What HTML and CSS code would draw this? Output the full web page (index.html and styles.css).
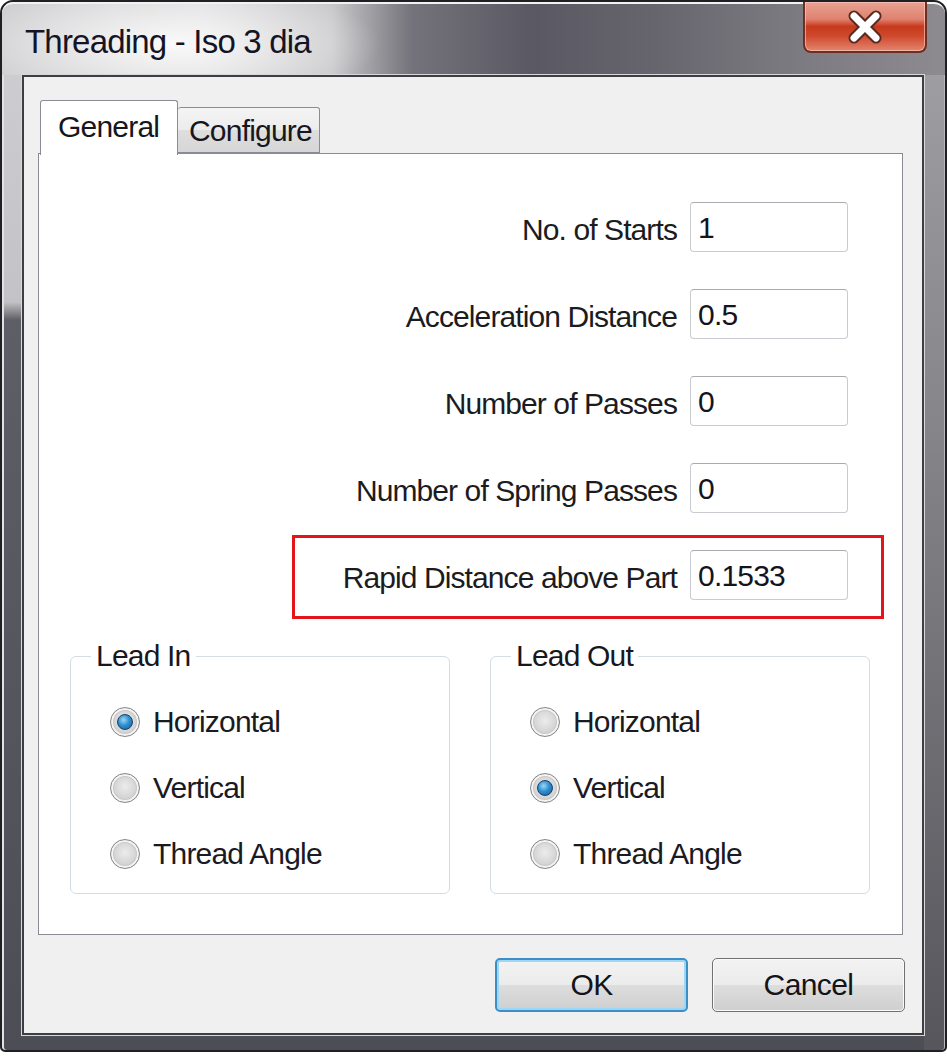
FILE: index.html
```html
<!DOCTYPE html>
<html>
<head>
<meta charset="utf-8">
<title>Threading - Iso 3 dia</title>
<link rel="stylesheet" href="styles.css">
</head>
<body>
<div class="window">
  <div class="titlebar">
    <div class="title">Threading - Iso 3 dia</div>
    <div class="close">
      <svg width="40" height="34" viewBox="0 0 40 34">
        <path d="M9 6 L31 28 M31 6 L9 28" stroke="#5a2a22" stroke-width="11" stroke-linecap="round"/>
        <path d="M9 6 L31 28 M31 6 L9 28" stroke="#ffffff" stroke-width="7" stroke-linecap="round"/>
      </svg>
    </div>
  </div>
  <div class="client">
    <div class="tabs">
      <div class="tab tab-active">General</div>
      <div class="tab tab-inactive">Configure</div>
    </div>
    <div class="panel">
      <div class="rows">
        <div class="row"><span class="label">No. of Starts</span><div class="input">1</div></div>
        <div class="row"><span class="label">Acceleration Distance</span><div class="input">0.5</div></div>
        <div class="row"><span class="label">Number of Passes</span><div class="input">0</div></div>
        <div class="row"><span class="label">Number of Spring Passes</span><div class="input">0</div></div>
        <div class="row"><span class="label">Rapid Distance above Part</span><div class="input">0.1533</div></div>
      </div>
      <div class="highlight"></div>
      <div class="groups">
        <fieldset class="group">
          <legend>Lead In</legend>
          <div class="radio-row"><span class="radio checked"></span><span>Horizontal</span></div>
          <div class="radio-row"><span class="radio"></span><span>Vertical</span></div>
          <div class="radio-row"><span class="radio"></span><span>Thread Angle</span></div>
        </fieldset>
        <fieldset class="group">
          <legend>Lead Out</legend>
          <div class="radio-row"><span class="radio"></span><span>Horizontal</span></div>
          <div class="radio-row"><span class="radio checked"></span><span>Vertical</span></div>
          <div class="radio-row"><span class="radio"></span><span>Thread Angle</span></div>
        </fieldset>
      </div>
    </div>
    <div class="buttons">
      <div class="btn btn-default">OK</div>
      <div class="btn">Cancel</div>
    </div>
  </div>
</div>
</body>
</html>
```
FILE: styles.css
```css
html, body {
  margin: 0;
  padding: 0;
  background: #ffffff;
}
body {
  font-family: "Liberation Sans", Arial, sans-serif;
  color: #1b1b1f;
}
.window {
  width: 947px;
  height: 1052px;
  box-sizing: border-box;
  border: 2px solid #1f1f24;
  border-radius: 13px 13px 5px 5px;
  display: flex;
  flex-direction: column;
  padding: 0 21px 15px 20px;
  background:
    linear-gradient(180deg, #a3a3a6 0, #85858a 40%, #56565c 100%) right top / 21px 100% no-repeat,
    linear-gradient(180deg, #d0d0d2 0, #c3c3c5 300px, #5e5e66 318px, #4d4d55 100%);
  box-shadow: inset 2px 0 0 #e2e2e4, inset -1px 0 0 #b8b8bb;
  overflow: hidden;
}
.titlebar {
  height: 73px;
  margin: 0 -21px 0 -20px;
  display: flex;
  justify-content: space-between;
  align-items: flex-start;
  border-top: 2px solid #f2f2f3;
  box-sizing: border-box;
  border-radius: 11px 11px 0 0;
  background:
    radial-gradient(ellipse 210px 60px at 170px 40px, rgba(255,255,255,0.85), rgba(255,255,255,0) 100%),
    linear-gradient(90deg, #cfcfd1 0, #dcdcde 200px, #c9c9cb 330px, #74727a 410px, #5a5862 530px, #66646c 650px, #7b7980 780px, #8d8b90 100%);
}
.title {
  padding: 18px 0 0 23px;
  font-size: 33px;
  line-height: 40px;
  letter-spacing: -0.8px;
  color: #141426;
}
.close {
  width: 124px;
  height: 51px;
  margin: -2px 18px 0 0;
  box-sizing: border-box;
  border: 2px solid #6e2e24;
  border-top: none;
  border-radius: 0 0 8px 8px;
  background: linear-gradient(180deg, #e9a293 0, #df826f 35%, #c7391c 50%, #cf4a2d 70%, #e3866f 100%);
  box-shadow: inset 0 0 0 1px rgba(255,210,200,0.6);
  display: flex;
  align-items: center;
  justify-content: center;
}
.client {
  flex: 1;
  background: #f0f0f0;
  border: 2px solid #3d3d44;
  box-shadow: 0 0 0 1px #d8d8da;
  padding: 23px 19px 0 14px;
  display: flex;
  flex-direction: column;
}
.tabs {
  display: flex;
  align-items: flex-end;
  height: 53px;
  padding-left: 2px;
}
.tab {
  font-size: 30px;
  letter-spacing: -0.8px;
  box-sizing: border-box;
  border: 1px solid #898c95;
  border-radius: 3px 3px 0 0;
  color: #16161c;
}
.tab-active {
  width: 138px;
  height: 55px;
  margin-bottom: -2px;
  position: relative;
  z-index: 1;
  background: #ffffff;
  border-bottom: none;
  padding: 8px 0 0 17px;
  line-height: 36px;
}
.tab-inactive {
  width: 142px;
  height: 46px;
  border-left: none;
  background: linear-gradient(180deg, #f4f4f4 0, #ececec 50%, #dedede 51%, #d6d6d6 100%);
  padding: 5px 0 0 11px;
  line-height: 36px;
}
.panel {
  position: relative;
  height: 782px;
  box-sizing: border-box;
  border: 1px solid #898c95;
  background: #ffffff;
  padding: 48px 0 0 0;
  display: flex;
  flex-direction: column;
}
.rows {
  display: flex;
  flex-direction: column;
  gap: 37px;
  padding-right: 54px;
}
.row {
  display: flex;
  justify-content: flex-end;
  align-items: center;
  gap: 13px;
  height: 50px;
}
.label {
  font-size: 30px;
  letter-spacing: -0.9px;
  color: #1b1b20;
  padding-top: 6px;
}
.input {
  width: 158px;
  height: 50px;
  box-sizing: border-box;
  border: 1px solid #c9cbd0;
  border-top-color: #a9abb1;
  border-radius: 4px;
  background: #ffffff;
  font-size: 30px;
  letter-spacing: -0.8px;
  line-height: 50px;
  padding-left: 7px;
  color: #14141c;
}
.highlight {
  position: absolute;
  left: 253px;
  top: 381px;
  width: 592px;
  height: 84px;
  box-sizing: border-box;
  border: 3px solid #e3141a;
  pointer-events: none;
}
.groups {
  display: flex;
  gap: 40px;
  padding: 0 32px 0 31px;
  margin-top: 40px;
}
.group {
  flex: 1;
  margin: 0;
  min-width: 0;
  border: 1px solid #d3dde3;
  border-radius: 6px;
  padding: 30px 0 20px 39px;
  height: 254px;
  box-sizing: border-box;
}
.group legend {
  font-size: 30px;
  letter-spacing: -0.8px;
  line-height: 32px;
  padding: 0 5px;
  margin-left: -19px;
  color: #17171d;
}
.radio-row {
  display: flex;
  align-items: center;
  gap: 13px;
  height: 40px;
  margin-bottom: 26px;
  font-size: 30px;
  letter-spacing: -0.8px;
  color: #1a1a22;
}
.radio-row:last-child {
  margin-bottom: 0;
}
.radio {
  width: 30px;
  height: 30px;
  box-sizing: border-box;
  border-radius: 50%;
  border: 1px solid #888888;
  background: radial-gradient(circle at 50% 45%, #ececec 0, #d4d4d4 55%, #b8b8b8 100%);
  box-shadow: inset 0 0 0 2px #f4f4f4, inset 0 0 0 3px #c8c8c8;
  display: flex;
  align-items: center;
  justify-content: center;
}
.radio.checked::after {
  content: "";
  width: 14px;
  height: 14px;
  border-radius: 50%;
  border: 1px solid #1d3f63;
  background: radial-gradient(circle at 40% 35%, #9ad8f7 0, #2f8fd0 45%, #135a98 100%);
}
.buttons {
  display: flex;
  justify-content: flex-end;
  gap: 24px;
  margin-top: 23px;
  margin-right: -2px;
}
.btn {
  width: 193px;
  height: 54px;
  box-sizing: border-box;
  border: 1px solid #707070;
  border-radius: 5px;
  background: linear-gradient(180deg, #f3f3f3 0, #ebebeb 50%, #dddddd 51%, #cfcfcf 100%);
  box-shadow: inset 0 0 0 1px #fbfbfb;
  display: flex;
  align-items: center;
  justify-content: center;
  font-size: 30px;
  letter-spacing: -0.6px;
  color: #141418;
}
.btn-default {
  border: 2px solid #3d8ec4;
  box-shadow: inset 0 0 0 2px #9ed7f4;
}
```
